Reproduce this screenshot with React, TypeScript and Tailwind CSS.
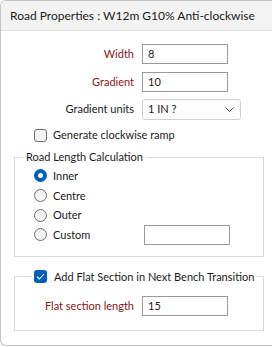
import React from "react";

const font = { fontFamily: 'Lato, "Noto Sans", sans-serif' };

const Field: React.FC<{ label: string; value: string; red?: boolean }> = ({ label, value, red }) => (
  <div className="flex items-center h-[20px]">
    <div className={`w-[134px] pr-[1px] text-right ${red ? "text-[#8b1414]" : "text-[#1a1a1a]"}`}>{label}</div>
    <div className="ml-[7px] w-[86px] h-[20px] border border-[#9a9a9a] bg-white flex items-center pl-[5px]">{value}</div>
  </div>
);

const Radio: React.FC<{ label: string; checked?: boolean; children?: React.ReactNode }> = ({ label, checked, children }) => (
  <div className="flex items-center h-[19.7px] pl-[19px]">
    {checked ? (
      <span className="w-[13px] h-[13px] rounded-full bg-[#005fb8] flex items-center justify-center">
        <span className="w-[5px] h-[5px] rounded-full bg-white" />
      </span>
    ) : (
      <span className="w-[13px] h-[13px] rounded-full border border-[#6e6e6e] bg-[#f3f3f3]" />
    )}
    <span className="ml-[6px] w-[91px]">{label}</span>
    {children}
  </div>
);

const App: React.FC = () => {
  return (
    <div className="w-[272px] h-[347px] bg-white text-[11px] leading-[16px] whitespace-nowrap text-[#1a1a1a] overflow-hidden" style={font}>
      <div className="h-[346px] border-l border-t border-b border-[#c4c4c4] rounded-l-[6px] overflow-hidden">
        <div className="h-[30px] bg-[#f3f3f3] border-b border-[#e3e3e3] pl-[9px] flex items-center text-[12px]">
          Road Properties : W12m G10% Anti-clockwise
        </div>

        <div className="pt-[13px] flex flex-col">
          <Field label="Width" value="8" red />
          <div className="h-[8px]" />
          <Field label="Gradient" value="10" red />
          <div className="h-[7px]" />
          <div className="flex items-center h-[20px]">
            <div className="w-[134px] pr-[1px] text-right">Gradient units</div>
            <div className="ml-[7px] w-[99px] h-[21px] border border-[#d0d0d0] rounded-[3px] bg-[#fdfdfd] flex items-center pl-[5px] pr-[6px]">
              <span className="flex-1">1 IN ?</span>
              <svg width="9" height="5" viewBox="0 0 9 5" fill="none">
                <path d="M0.5 0.5 L4.5 4.5 L8.5 0.5" stroke="#555" strokeWidth="1" />
              </svg>
            </div>
          </div>
          <div className="flex items-center h-[20px] mt-[6px] pl-[33px]">
            <span className="w-[13px] h-[13px] rounded-[3px] border border-[#6e6e6e] bg-[#f3f3f3]" />
            <span className="ml-[6px]">Generate clockwise ramp</span>
          </div>

          <fieldset className="mt-[4px] ml-[13px] w-[250px] border border-[#dcdcdc] pb-[11px]">
            <legend className="ml-[8px] px-[3px]">Road Length Calculation</legend>
            <div className="flex flex-col pt-[1px]">
              <Radio label="Inner" checked />
              <Radio label="Centre" />
              <Radio label="Outer" />
              <Radio label="Custom">
                <span className="w-[86px] h-[20px] border border-[#9a9a9a] bg-white" />
              </Radio>
            </div>
          </fieldset>

          <fieldset className="mt-[12px] ml-[13px] w-[250px] border border-[#dcdcdc] pb-[14px]">
            <legend className="ml-[17px] px-[2px] flex items-center">
              <span className="w-[13px] h-[13px] rounded-[3px] bg-[#005fb8] flex items-center justify-center">
                <svg width="9" height="7" viewBox="0 0 9 7" fill="none">
                  <path d="M1 3.6 L3.4 6 L8 1" stroke="white" strokeWidth="1.1" />
                </svg>
              </span>
              <span className="ml-[7px]">Add Flat Section in Next Bench Transition</span>
            </legend>
            <div className="pt-[11px] -ml-[14px]">
              <Field label="Flat section length" value="15" red />
            </div>
          </fieldset>
        </div>
      </div>
    </div>
  );
};

export default App;
